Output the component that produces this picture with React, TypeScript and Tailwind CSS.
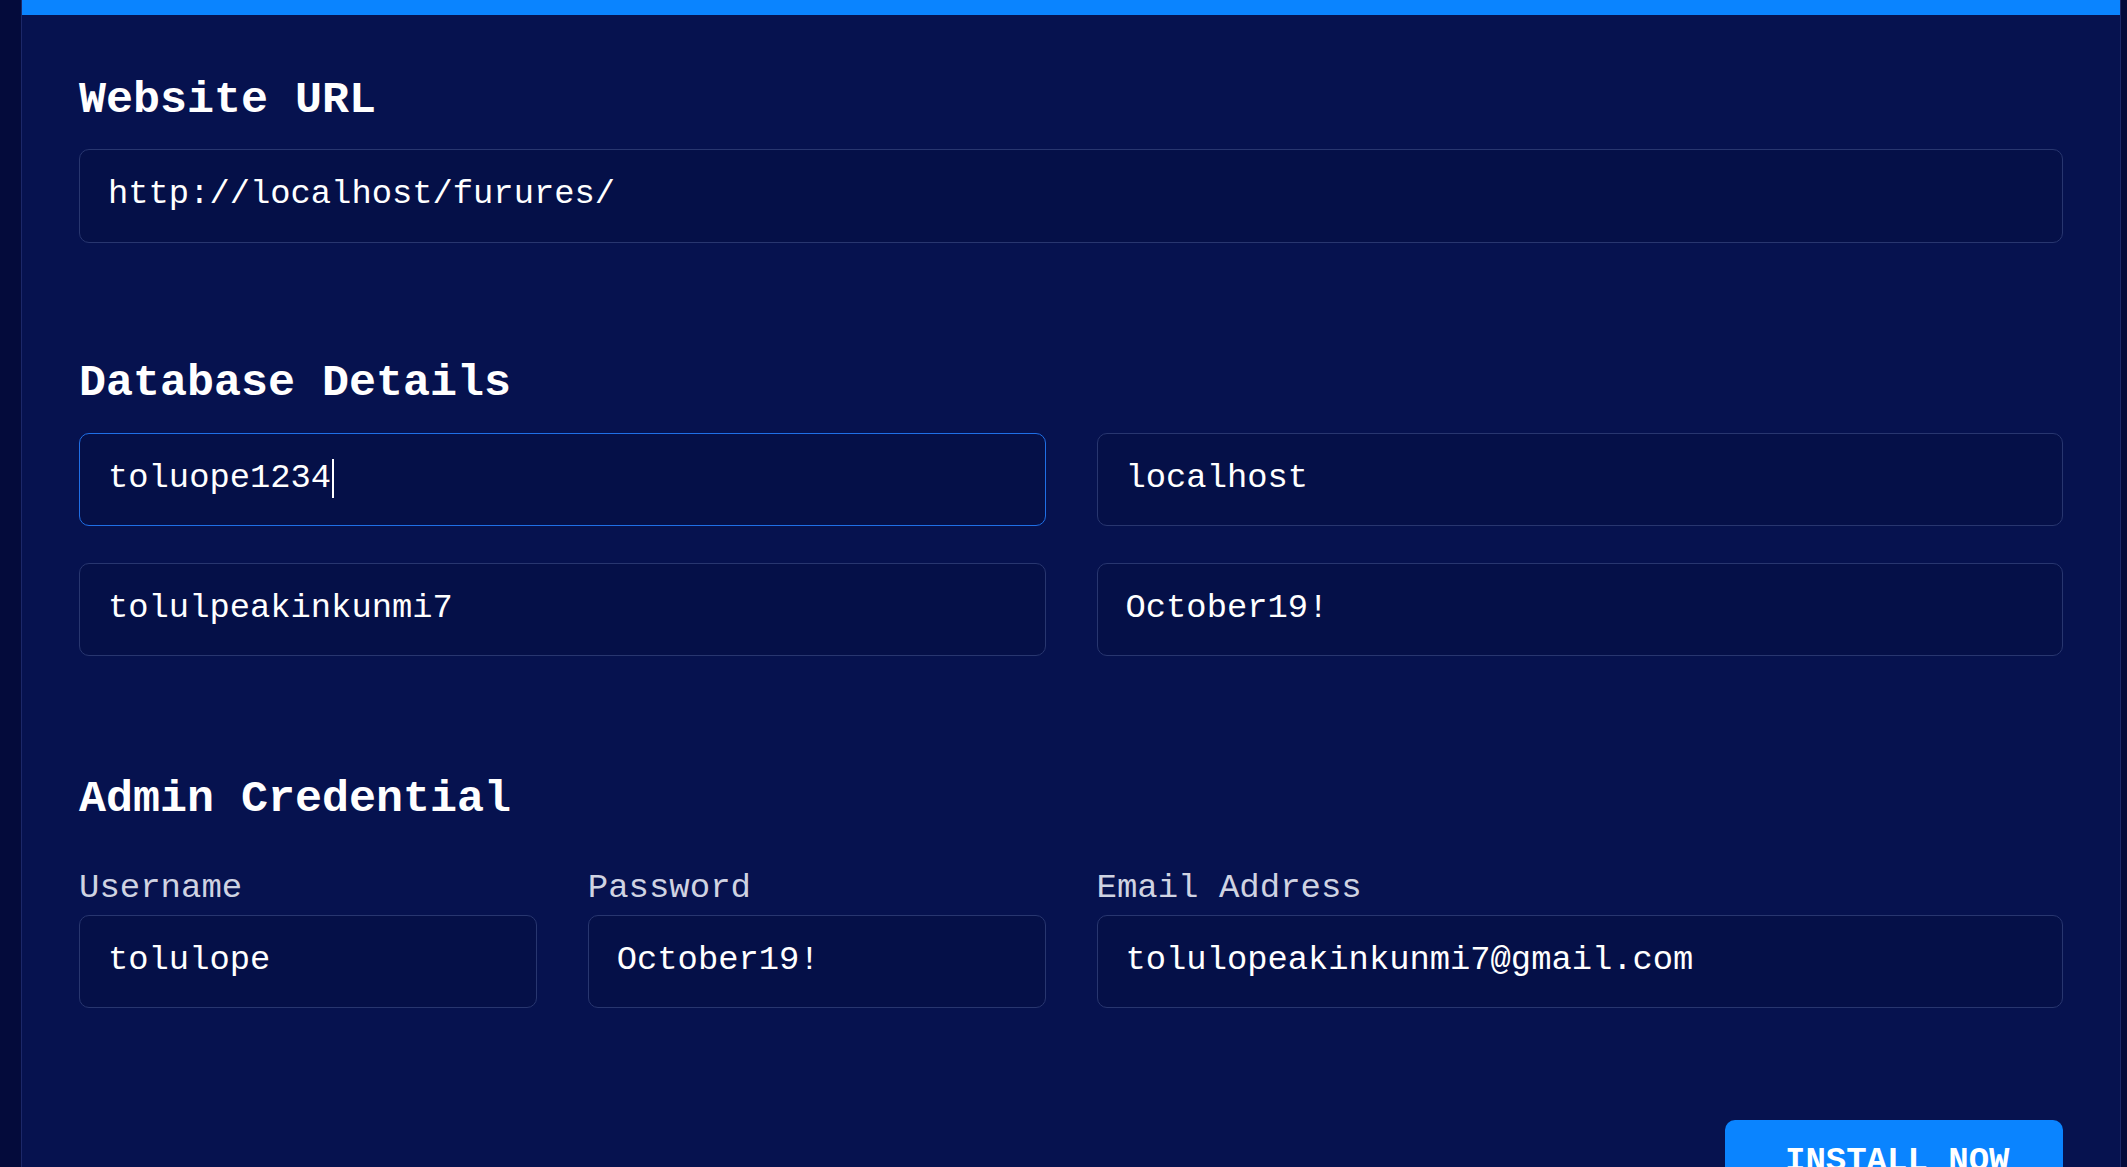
import React from "react";

const mono = { fontFamily: '"Liberation Mono", "Courier New", monospace' };

function Field({ value, focused = false, caret = false }: { value: string; focused?: boolean; caret?: boolean }) {
  return (
    <div
      className={
        "flex h-[93px] items-center rounded-[10px] border bg-[#051048] pl-[28px] pb-[2px] text-[33.8px] leading-none text-white " +
        (focused ? "border-[#1f6fe6]" : "border-[#28366f]")
      }
    >
      <span className="whitespace-pre">{value}</span>
      {caret && <span className="ml-[1px] inline-block h-[39px] w-[1.5px] bg-white" />}
    </div>
  );
}

function Label({ children }: { children: React.ReactNode }) {
  return <div className="mb-[10px] text-[34px] leading-none text-[#cfd3e2]">{children}</div>;
}

function Heading({ children }: { children: React.ReactNode }) {
  return <h2 className="text-[45px] font-bold leading-none text-white">{children}</h2>;
}

export default function App() {
  return (
    <div className="h-[1167px] w-full overflow-hidden bg-[#040b3b]" style={mono}>
      <div className="ml-[21px] mr-[6px] h-full border-x border-[#1c2868] bg-[#06124f]">
        <div className="h-[15px] bg-[#0a84ff]" />
        <div className="px-[57px] pt-[63px]">
          <Heading>Website URL</Heading>
          <div className="mt-[26px]">
            <div className="flex h-[94px] items-center rounded-[10px] border border-[#28366f] bg-[#051048] pl-[28px] pb-[2px] text-[33.8px] leading-none text-white">
              http://localhost/furures/
            </div>
          </div>

          <div className="mt-[118px]">
            <Heading>Database Details</Heading>
          </div>
          <div className="mt-[27px] grid grid-cols-2 gap-x-[51px] gap-y-[37px]">
            <Field value="toluope1234" focused caret />
            <Field value="localhost" />
            <Field value="tolulpeakinkunmi7" />
            <Field value="October19!" />
          </div>

          <div className="mt-[121px]">
            <Heading>Admin Credential</Heading>
          </div>
          <div className="mt-[49px] grid grid-cols-4 gap-x-[51px]">
            <div>
              <Label>Username</Label>
              <Field value="tolulope" />
            </div>
            <div>
              <Label>Password</Label>
              <Field value="October19!" />
            </div>
            <div className="col-span-2">
              <Label>Email Address</Label>
              <Field value="tolulopeakinkunmi7@gmail.com" />
            </div>
          </div>

          <div className="mt-[112px] flex justify-end">
            <button className="h-[82px] w-[338px] rounded-[10px] bg-[#0a84ff] pl-[60px] text-left text-[34px] font-bold uppercase leading-none text-white">
              Install Now
            </button>
          </div>
        </div>
      </div>
    </div>
  );
}
